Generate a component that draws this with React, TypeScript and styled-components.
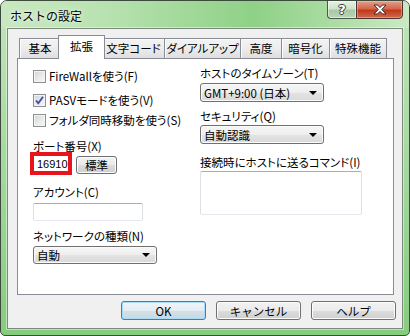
import styled, { createGlobalStyle } from 'styled-components'

const GlobalStyle = createGlobalStyle`
  html, body {
    margin: 0;
    padding: 0;
    background: #ffffff;
  }
  body {
    font-family: "Noto Sans CJK JP", "Noto Sans", sans-serif;
    font-size: 11.5px;
    color: #000;
    font-feature-settings: "palt";
  }
`

const tabs = [
  { label: '基本', width: 42 },
  { label: '拡張', width: 43, active: true },
  { label: '文字コード', width: 63 },
  { label: 'ダイアルアップ', width: 77 },
  { label: '高度', width: 42 },
  { label: '暗号化', width: 49 },
  { label: '特殊機能', width: 58 },
]

const CloseGlyph = () => (
  <svg width="14" height="11" viewBox="0 0 14 11">
    <path
      d="M1 1 H4.5 L7 3.6 L9.5 1 H13 L8.8 5.5 L13 10 H9.5 L7 7.4 L4.5 10 H1 L5.2 5.5 Z"
      fill="#fff"
      stroke="#3a2a28"
      strokeWidth="1"
      strokeLinejoin="round"
    />
  </svg>
)

const CheckMark = () => (
  <svg width="11" height="11" viewBox="0 0 11 11">
    <path d="M2 5.5 L4.3 8.2 L9 1.8" fill="none" stroke="#3c55a0" strokeWidth="1.9" />
  </svg>
)

const Checkbox: React.FC<{ checked?: boolean; label: string; mt: number }> = ({ checked, label, mt }) => (
  <CheckRow $mt={mt}>
    <CheckBoxFrame>{checked && <CheckMark />}</CheckBoxFrame>
    <span>{label}</span>
  </CheckRow>
)

const Combo: React.FC<{ value: string; mt: number; h: number }> = ({ value, mt, h }) => (
  <ComboBox $mt={mt} $h={h}>
    <span>{value}</span>
    <ComboArrow />
  </ComboBox>
)

export default function App() {
  return (
    <>
      <GlobalStyle />
      <Window>
        <TitleBar>
          <TitleText>ホストの設定</TitleText>
          <CaptionGroup>
            <HelpCaption>?</HelpCaption>
            <CloseCaption>
              <CloseGlyph />
            </CloseCaption>
          </CaptionGroup>
        </TitleBar>
        <Client>
          <TabRow>
            {tabs.map((t, i) => (
              <Tab key={t.label} $width={t.width} $active={!!t.active} $first={i === 0}>
                {t.label}
              </Tab>
            ))}
          </TabRow>
          <Panel>
            <LeftCol>
              <Checkbox label="FireWallを使う(F)" mt={11} />
              <Checkbox label="PASVモードを使う(V)" checked mt={11} />
              <Checkbox label="フォルダ同時移動を使う(S)" mt={7} />
              <FieldLabel $mt={13}>ポート番号(X)</FieldLabel>
              <PortRow>
                <PortBox>16910</PortBox>
                <SmallButton>標準</SmallButton>
              </PortRow>
              <FieldLabel $mt={11}>アカウント(C)</FieldLabel>
              <TextBox $mt={5} $w={110} $h={18} />
              <FieldLabel $mt={9}>ネットワークの種類(N)</FieldLabel>
              <Combo value="自動" mt={4} h={18} />
            </LeftCol>
            <RightCol>
              <FieldLabel $mt={8}>ホストのタイムゾーン(T)</FieldLabel>
              <Combo value="GMT+9:00 (日本)" mt={4} h={19} />
              <FieldLabel $mt={8}>セキュリティ(Q)</FieldLabel>
              <Combo value="自動認識" mt={3} h={19} />
              <FieldLabel $mt={12}>接続時にホストに送るコマンド(I)</FieldLabel>
              <TextBox $mt={3} $w={162} $h={44} />
            </RightCol>
          </Panel>
          <ButtonRow>
            <DialogButton $default>OK</DialogButton>
            <DialogButton>キャンセル</DialogButton>
            <DialogButton>ヘルプ</DialogButton>
          </ButtonRow>
        </Client>
      </Window>
    </>
  )
}

// Styled components
const Window = styled.div`
  width: 410px;
  height: 336px;
  box-sizing: border-box;
  border: 1px solid #3d4a3e;
  border-radius: 7px 7px 5px 5px;
  background: linear-gradient(180deg, #c2e5ba 0%, #a6daa0 45%, #86cc7e 100%);
  display: flex;
  flex-direction: column;
  overflow: hidden;
`

const TitleBar = styled.div`
  height: 27px;
  flex: none;
  display: flex;
  align-items: flex-start;
  background: linear-gradient(
    90deg,
    #c9e8c1 0%,
    #b9e2b1 25%,
    #a2d99a 45%,
    #8fd187 62%,
    #a6da9e 78%,
    #cbe9c4 100%
  );
`

const TitleText = styled.div`
  align-self: center;
  padding-left: 9px;
  padding-top: 1px;
  font-size: 12px;
  font-feature-settings: normal;
  color: #000;
  text-shadow: 0 0 6px rgba(255, 255, 255, 0.9), 0 0 2px rgba(255, 255, 255, 0.8);
`

const CaptionGroup = styled.div`
  margin-left: auto;
  margin-right: 6px;
  margin-top: -1px;
  display: flex;
`

const HelpCaption = styled.div`
  width: 29px;
  height: 19px;
  box-sizing: border-box;
  border: 1px solid #4a5a4a;
  border-right: none;
  border-radius: 0 0 0 4px;
  background: linear-gradient(180deg, #e6f1e4 0%, #cfe2cc 48%, #a9c6a6 52%, #b9d6b5 100%);
  box-shadow: inset 0 0 0 1px rgba(255, 255, 255, 0.5);
  display: flex;
  align-items: center;
  justify-content: center;
  font-family: "DejaVu Sans", sans-serif;
  font-weight: bold;
  font-size: 13px;
  color: #fff;
  text-shadow: -1px 0 #3b3b3b, 1px 0 #3b3b3b, 0 -1px #3b3b3b, 0 1px #3b3b3b;
`

const CloseCaption = styled.div`
  width: 47px;
  height: 19px;
  box-sizing: border-box;
  border: 1px solid #4a3330;
  border-radius: 0 0 4px 0;
  background: linear-gradient(180deg, #e4a08c 0%, #d4664c 45%, #c0391c 55%, #d26a4a 100%);
  box-shadow: inset 0 0 0 1px rgba(255, 220, 200, 0.4);
  display: flex;
  align-items: center;
  justify-content: center;
`

const Client = styled.div`
  flex: 1;
  margin: 0 6px 6px;
  border: 1px solid #7c897d;
  background: #f0f0f0;
  padding: 6px 8px 8px 9px;
  display: flex;
  flex-direction: column;
  box-shadow: 0 0 0 1px rgba(255, 255, 255, 0.45);
`

const TabRow = styled.div`
  height: 23px;
  flex: none;
  display: flex;
  align-items: flex-end;
  padding-left: 2px;
  position: relative;
  z-index: 2;
`

const Tab = styled.div<{ $width: number; $active: boolean; $first: boolean }>`
  box-sizing: border-box;
  width: ${({ $width, $active }) => ($active ? $width + 4 : $width)}px;
  height: ${({ $active }) => ($active ? 24 : 20)}px;
  margin-left: ${({ $first, $active }) => ($first ? 0 : $active ? -3 : -1)}px;
  margin-right: ${({ $active }) => ($active ? -2 : 0)}px;
  margin-bottom: ${({ $active }) => ($active ? -1 : 0)}px;
  border: 1px solid #898c95;
  border-bottom: none;
  background: ${({ $active }) =>
    $active ? '#ffffff' : 'linear-gradient(180deg, #f3f3f3 0%, #ececec 50%, #dedede 100%)'};
  box-shadow: ${({ $active }) => ($active ? 'none' : 'inset 1px 1px 0 #fcfcfc')};
  position: relative;
  z-index: ${({ $active }) => ($active ? 1 : 0)};
  display: flex;
  justify-content: center;
  padding-top: ${({ $active }) => ($active ? 3 : 2)}px;
  line-height: 14px;
  white-space: nowrap;
`

const Panel = styled.div`
  height: 237px;
  flex: none;
  box-sizing: border-box;
  border: 1px solid #898c95;
  background: #ffffff;
  padding-left: 15px;
  display: flex;
  position: relative;
  z-index: 1;
`

const LeftCol = styled.div`
  width: 167px;
  display: flex;
  flex-direction: column;
  align-items: flex-start;
`

const RightCol = styled.div`
  flex: 1;
  display: flex;
  flex-direction: column;
  align-items: flex-start;
`

const CheckRow = styled.div<{ $mt: number }>`
  margin-top: ${({ $mt }) => $mt}px;
  height: 13px;
  display: flex;
  align-items: center;
  gap: 3px;
  line-height: 13px;
  white-space: nowrap;
`

const CheckBoxFrame = styled.span`
  width: 13px;
  height: 13px;
  box-sizing: border-box;
  border: 1px solid #8e8f8f;
  background: linear-gradient(135deg, #cfd3d9 0%, #e9eaec 55%, #f7f7f7 100%);
  box-shadow: inset 0 0 0 1px #f4f4f4;
  display: flex;
  align-items: center;
  justify-content: center;
  flex: none;
`

const FieldLabel = styled.div<{ $mt: number }>`
  margin-top: ${({ $mt }) => $mt}px;
  height: 12px;
  line-height: 12px;
  white-space: nowrap;
`

const PortRow = styled.div`
  display: flex;
  align-items: flex-end;
  gap: 4px;
  margin-left: -3px;
  height: 23px;
`

const PortBox = styled.div`
  width: 42px;
  height: 23px;
  box-sizing: border-box;
  border: 4px solid #e8141c;
  background: #ffffff;
  font-family: "Liberation Sans", Arial, sans-serif;
  font-size: 11px;
  padding-left: 3px;
  display: flex;
  align-items: center;
`

const SmallButton = styled.button`
  width: 41px;
  height: 18px;
  margin-bottom: 1px;
  padding: 0;
  box-sizing: border-box;
  border: 1px solid #707070;
  border-radius: 3px;
  background: linear-gradient(180deg, #f2f2f2 0%, #ebebeb 50%, #dddddd 51%, #cfcfcf 100%);
  box-shadow: inset 0 0 0 1px #fcfcfc;
  font-family: inherit;
  font-size: 11.5px;
  color: #000;
  line-height: 14px;
`

const TextBox = styled.div<{ $mt: number; $w: number; $h: number }>`
  margin-top: ${({ $mt }) => $mt}px;
  width: ${({ $w }) => $w}px;
  height: ${({ $h }) => $h}px;
  box-sizing: border-box;
  border: 1px solid #dbdfe6;
  border-top-color: #abadb3;
  border-bottom-color: #e3e9ef;
  border-radius: 2px;
  background: #ffffff;
`

const ComboBox = styled.div<{ $mt: number; $h: number }>`
  margin-top: ${({ $mt }) => $mt}px;
  width: 124px;
  height: ${({ $h }) => $h}px;
  box-sizing: border-box;
  border: 1px solid #707070;
  border-radius: 3px;
  background: linear-gradient(180deg, #f6f6f6 0%, #eeeeee 50%, #e3e3e3 51%, #dadada 100%);
  box-shadow: inset 0 0 0 1px #fbfbfb;
  display: flex;
  align-items: center;
  padding-left: 3px;
  line-height: 14px;
  white-space: nowrap;
`

const ComboArrow = styled.span`
  margin-left: auto;
  margin-right: 6px;
  width: 0;
  height: 0;
  border-left: 4px solid transparent;
  border-right: 4px solid transparent;
  border-top: 4px solid #000;
`

const ButtonRow = styled.div`
  display: flex;
  justify-content: flex-end;
  gap: 10px;
  margin-top: 6px;
  margin-right: -2px;
`

const DialogButton = styled.button<{ $default?: boolean }>`
  width: 85px;
  height: 19px;
  padding: 0;
  box-sizing: border-box;
  border: 1px solid ${({ $default }) => ($default ? '#3c7fb1' : '#707070')};
  border-radius: 3px;
  background: ${({ $default }) =>
    $default
      ? 'linear-gradient(180deg, #f1f5f8 0%, #e3ecf2 50%, #d3e0e9 51%, #c8d8e3 100%)'
      : 'linear-gradient(180deg, #f2f2f2 0%, #ebebeb 50%, #dddddd 51%, #cfcfcf 100%)'};
  box-shadow: ${({ $default }) =>
    $default ? 'inset 0 0 0 1px #a9dcf6' : 'inset 0 0 0 1px #fcfcfc'};
  font-family: inherit;
  font-size: 11.5px;
  color: #000;
  line-height: 14px;
`
